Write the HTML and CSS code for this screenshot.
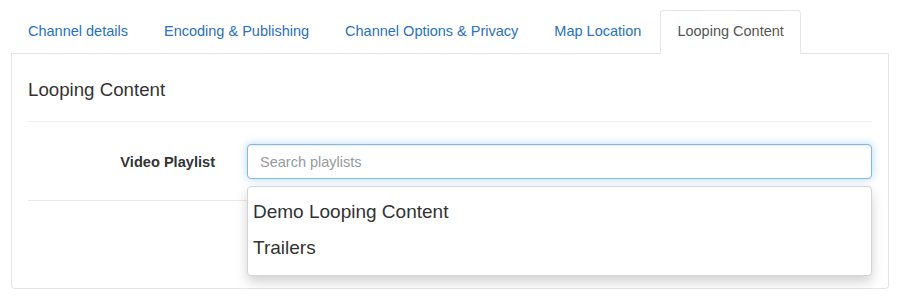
FILE: index.html
```html
<!DOCTYPE html>
<html lang="en">
<head>
    <meta charset="UTF-8">
    <meta name="viewport" content="width=device-width, initial-scale=1.0">
    <title>Channel - Looping Content</title>
    <link rel="stylesheet" href="styles.css">
</head>
<body>
    <ul class="nav-tabs">
        <li><a href="#">Channel details</a></li>
        <li><a href="#">Encoding &amp; Publishing</a></li>
        <li><a href="#">Channel Options &amp; Privacy</a></li>
        <li><a href="#">Map Location</a></li>
        <li class="active"><a href="#">Looping Content</a></li>
    </ul>

    <div class="tab-panel">
        <h4 class="panel-title">Looping Content</h4>

        <div class="form-row">
            <label class="form-label" for="playlist">Video Playlist</label>
            <div class="search-wrap">
                <input id="playlist" class="form-input" type="text" placeholder="Search playlists">
                <ul class="dropdown">
                    <li>Demo Looping Content</li>
                    <li>Trailers</li>
                </ul>
            </div>
        </div>
    </div>
</body>
</html>
```

FILE: styles.css
```css
* {
    margin: 0;
    padding: 0;
    box-sizing: border-box;
}

body {
    font-family: "Liberation Sans", Arial, sans-serif;
    font-size: 14.5px;
    color: #333;
    background-color: #fff;
    padding: 10px 11px 0 11px;
}

.nav-tabs {
    list-style: none;
    display: flex;
    border-bottom: 1px solid #e3e3e3;
}

.nav-tabs li {
    margin-right: 2px;
    margin-bottom: -1px;
}

.nav-tabs a {
    display: block;
    padding: 10px 16px 11px;
    line-height: 21px;
    color: #2a70c0;
    text-decoration: none;
    border: 1px solid transparent;
    border-radius: 4px 4px 0 0;
}

.nav-tabs li.active a {
    color: #555;
    background-color: #fff;
    border-color: #e6e6e6 #e6e6e6 transparent;
}

.tab-panel {
    border: 1px solid #e6e6e6;
    border-top: none;
    border-radius: 0 0 4px 4px;
    padding: 25px 16px 0;
    height: 235px;
}

.panel-title {
    font-size: 18.7px;
    font-weight: normal;
    line-height: 22px;
    color: #333;
    padding-bottom: 20px;
    border-bottom: 1px solid #f0f0f0;
}

.form-row {
    display: flex;
    align-items: center;
    margin-top: 22px;
    padding-bottom: 21px;
    border-bottom: 1px solid #e8e8e8;
}

.form-label {
    width: 187px;
    text-align: right;
    font-weight: bold;
    font-size: 14.6px;
    color: #333;
}

.search-wrap {
    position: relative;
    flex: 1;
    margin-left: 32px;
}

.form-input {
    display: block;
    width: 100%;
    height: 35px;
    padding: 6px 12px;
    font-family: inherit;
    font-size: 14.5px;
    color: #555;
    border: 1px solid #7fb8ea;
    border-radius: 4px;
    outline: none;
    box-shadow: inset 0 1px 1px rgba(0, 0, 0, 0.075), 0 0 8px rgba(102, 175, 233, 0.5);
}

.form-input::placeholder {
    color: #999;
}

.dropdown {
    position: absolute;
    top: 42px;
    left: 0;
    right: 0;
    list-style: none;
    background-color: #fff;
    border: 1px solid #d4d4d4;
    border-radius: 4px;
    padding: 7px 0 9px;
    box-shadow: 0 6px 12px rgba(0, 0, 0, 0.175);
    z-index: 10;
}

.dropdown li {
    padding: 0 5px;
    line-height: 36px;
    font-size: 19px;
    color: #333;
}
```
